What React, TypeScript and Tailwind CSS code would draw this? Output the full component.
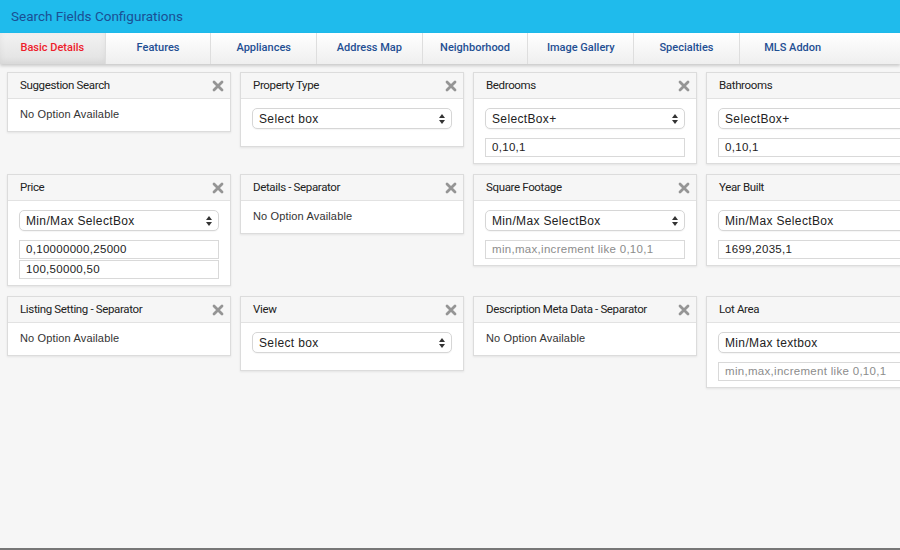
import type { ReactNode } from "react";

type Field =
  | { kind: "none" }
  | { kind: "select"; value: string; inputs?: { text: string; placeholder?: boolean }[] };

type Card = { title: string; closable: boolean; field: Field };

const tabs = [
  "Basic Details",
  "Features",
  "Appliances",
  "Address Map",
  "Neighborhood",
  "Image Gallery",
  "Specialties",
  "MLS Addon",
];

const HINT = "min,max,increment like 0,10,1";

const cards: Card[] = [
  { title: "Suggestion Search", closable: true, field: { kind: "none" } },
  { title: "Property Type", closable: true, field: { kind: "select", value: "Select box" } },
  { title: "Bedrooms", closable: true, field: { kind: "select", value: "SelectBox+", inputs: [{ text: "0,10,1" }] } },
  { title: "Bathrooms", closable: true, field: { kind: "select", value: "SelectBox+", inputs: [{ text: "0,10,1" }] } },
  {
    title: "Price",
    closable: true,
    field: { kind: "select", value: "Min/Max SelectBox", inputs: [{ text: "0,10000000,25000" }, { text: "100,50000,50" }] },
  },
  { title: "Details - Separator", closable: true, field: { kind: "none" } },
  {
    title: "Square Footage",
    closable: true,
    field: { kind: "select", value: "Min/Max SelectBox", inputs: [{ text: HINT, placeholder: true }] },
  },
  { title: "Year Built", closable: true, field: { kind: "select", value: "Min/Max SelectBox", inputs: [{ text: "1699,2035,1" }] } },
  { title: "Listing Setting - Separator", closable: true, field: { kind: "none" } },
  { title: "View", closable: true, field: { kind: "select", value: "Select box" } },
  { title: "Description Meta Data - Separator", closable: true, field: { kind: "none" } },
  {
    title: "Lot Area",
    closable: true,
    field: { kind: "select", value: "Min/Max textbox", inputs: [{ text: HINT, placeholder: true }] },
  },
];

function CloseX() {
  return (
    <svg width="12" height="12" viewBox="0 0 12 12" className="shrink-0">
      <path d="M2 2 L10 10 M10 2 L2 10" stroke="#959595" strokeWidth="2.8" strokeLinecap="round" />
    </svg>
  );
}

function SelectLike({ value }: { value: string }) {
  return (
    <div className="flex h-[21px] items-center justify-between rounded-[5px] border border-[#d6d6d6] bg-white pl-[6px] pr-[6px] shadow-[0_1px_1px_rgba(0,0,0,0.04)]">
      <span className="text-[12px] tracking-[0.35px] text-[#222]">{value}</span>
      <svg width="6" height="10" viewBox="0 0 6 10">
        <path d="M0 4 L3 0 L6 4 Z M0 6 L3 10 L6 6 Z" fill="#333" />
      </svg>
    </div>
  );
}

function CardBox({ card }: { card: Card }): ReactNode {
  const f = card.field;
  return (
    <div className="border border-[#dcdcdc] bg-white shadow-[0_1px_2px_rgba(0,0,0,0.08)]">
      <div className="flex h-[26px] items-center justify-between border-b border-[#e2e2e2] bg-[#f6f6f6] pl-[12px] pr-[6px] pt-px">
        <span className="[font-family:Roboto,sans-serif] text-[11.5px] tracking-[-0.35px] text-[#222]">{card.title}</span>
        {card.closable ? <CloseX /> : null}
      </div>
      {f.kind === "none" ? (
        <div className="px-[12px] pb-[8px] pt-[7px] text-[11px] tracking-[0.15px] text-[#333]">No Option Available</div>
      ) : (
        <div className="px-[11px] pb-[6px] pt-[9px]">
          <SelectLike value={f.value} />
          {f.inputs ? (
            <div className="mt-[9px] flex flex-col gap-px">
              {f.inputs.map((inp, i) => (
                <div
                  key={i}
                  className={`flex h-[19px] items-center border border-[#d9d9d9] bg-white pl-[6px] text-[11.5px] tracking-[0.3px] ${
                    inp.placeholder ? "text-[#8c8c8c]" : "text-[#222]"
                  }`}
                >
                  {inp.text}
                </div>
              ))}
            </div>
          ) : (
            <div className="h-[11px]" />
          )}
        </div>
      )}
    </div>
  );
}

export default function App() {
  return (
    <div className="flex h-[550px] w-[900px] flex-col overflow-hidden border-b-2 border-[#777] bg-[#f6f6f6] [font-family:'Liberation_Sans',Arial,sans-serif]">
      <header className="flex h-[33px] shrink-0 items-center bg-[#1fbbec] px-[11px]">
        <h1 className="[font-family:Roboto,sans-serif] text-[13.5px] font-normal text-[#1b4f94]">Search Fields Configurations</h1>
      </header>

      <nav className="flex h-[31px] shrink-0 bg-gradient-to-b from-white to-[#efefef] shadow-[0_2px_3px_rgba(0,0,0,0.18)]">
        {tabs.map((t, i) => (
          <div
            key={t}
            className={`flex w-[105.7px] shrink-0 items-center justify-center [font-family:Roboto,sans-serif] text-[11px] font-medium ${
              i < tabs.length - 1 ? "border-r border-[#dedede]" : ""
            } ${
              i === 0
                ? "bg-gradient-to-b from-[#f2f2f2] to-[#e2e2e2] text-[#ee1d2b] shadow-[inset_0_-2px_6px_rgba(0,0,0,0.06)]"
                : "text-[#1f4f93]"
            }`}
          >
            {t}
          </div>
        ))}
        <div className="flex-1" />
      </nav>

      <main className="min-h-0 flex-1 overflow-hidden pl-[7px] pt-[8px]">
        <div className="grid w-[960px] grid-cols-[224px_224px_224px_224px] items-start gap-x-[9px] gap-y-[10px]">
          {cards.map((c) => (
            <CardBox key={c.title} card={c} />
          ))}
        </div>
      </main>
    </div>
  );
}
